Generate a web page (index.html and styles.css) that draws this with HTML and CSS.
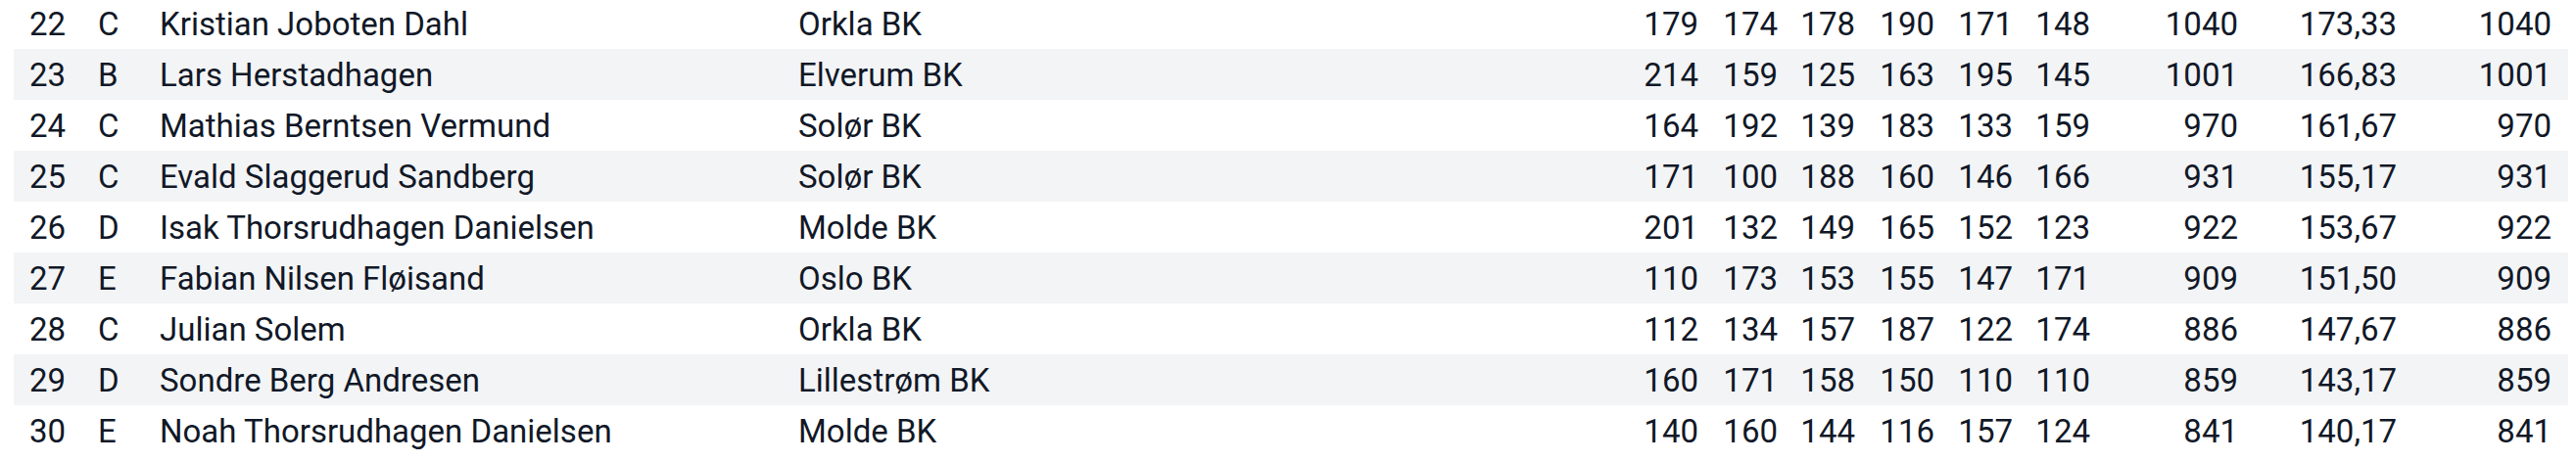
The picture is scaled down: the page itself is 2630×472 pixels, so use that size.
FILE: index.html
```html
<!DOCTYPE html>
<html lang="en">
<head>
  <meta charset="UTF-8">
  <title>Resultater</title>
  <link rel="stylesheet" href="styles.css">
</head>
<body>
  <div class="results">
    <div class="row"><span>22</span><span>C</span><span>Kristian Joboten Dahl</span><span>Orkla BK</span><span class="num">179</span><span class="num">174</span><span class="num">178</span><span class="num">190</span><span class="num">171</span><span class="num">148</span><span class="num">1040</span><span class="num">173,33</span><span class="num">1040</span></div>
    <div class="row"><span>23</span><span>B</span><span>Lars Herstadhagen</span><span>Elverum BK</span><span class="num">214</span><span class="num">159</span><span class="num">125</span><span class="num">163</span><span class="num">195</span><span class="num">145</span><span class="num">1001</span><span class="num">166,83</span><span class="num">1001</span></div>
    <div class="row"><span>24</span><span>C</span><span>Mathias Berntsen Vermund</span><span>Solør BK</span><span class="num">164</span><span class="num">192</span><span class="num">139</span><span class="num">183</span><span class="num">133</span><span class="num">159</span><span class="num">970</span><span class="num">161,67</span><span class="num">970</span></div>
    <div class="row"><span>25</span><span>C</span><span>Evald Slaggerud Sandberg</span><span>Solør BK</span><span class="num">171</span><span class="num">100</span><span class="num">188</span><span class="num">160</span><span class="num">146</span><span class="num">166</span><span class="num">931</span><span class="num">155,17</span><span class="num">931</span></div>
    <div class="row"><span>26</span><span>D</span><span>Isak Thorsrudhagen Danielsen</span><span>Molde BK</span><span class="num">201</span><span class="num">132</span><span class="num">149</span><span class="num">165</span><span class="num">152</span><span class="num">123</span><span class="num">922</span><span class="num">153,67</span><span class="num">922</span></div>
    <div class="row"><span>27</span><span>E</span><span>Fabian Nilsen Fløisand</span><span>Oslo BK</span><span class="num">110</span><span class="num">173</span><span class="num">153</span><span class="num">155</span><span class="num">147</span><span class="num">171</span><span class="num">909</span><span class="num">151,50</span><span class="num">909</span></div>
    <div class="row"><span>28</span><span>C</span><span>Julian Solem</span><span>Orkla BK</span><span class="num">112</span><span class="num">134</span><span class="num">157</span><span class="num">187</span><span class="num">122</span><span class="num">174</span><span class="num">886</span><span class="num">147,67</span><span class="num">886</span></div>
    <div class="row"><span>29</span><span>D</span><span>Sondre Berg Andresen</span><span>Lillestrøm BK</span><span class="num">160</span><span class="num">171</span><span class="num">158</span><span class="num">150</span><span class="num">110</span><span class="num">110</span><span class="num">859</span><span class="num">143,17</span><span class="num">859</span></div>
    <div class="row"><span>30</span><span>E</span><span>Noah Thorsrudhagen Danielsen</span><span>Molde BK</span><span class="num">140</span><span class="num">160</span><span class="num">144</span><span class="num">116</span><span class="num">157</span><span class="num">124</span><span class="num">841</span><span class="num">140,17</span><span class="num">841</span></div>
  </div>
</body>
</html>
```

FILE: styles.css
```css
body {
  margin: 0;
  font-family: Roboto, "Liberation Sans", sans-serif;
  font-size: 33px;
  color: #111827;
  background: white;
}

.results {
  margin: -2px 8px 0 14px;
}

.row {
  display: grid;
  grid-template-columns: 70px 63px 652px 839px 80px 81px 79px 81px 80px 79px 151px 162px 158px;
  align-items: center;
  height: 52px;
  padding: 0 17px 0 16px;
  white-space: nowrap;
}

.row:nth-child(even) {
  background-color: #f3f4f6;
}

.num {
  text-align: right;
}
```
